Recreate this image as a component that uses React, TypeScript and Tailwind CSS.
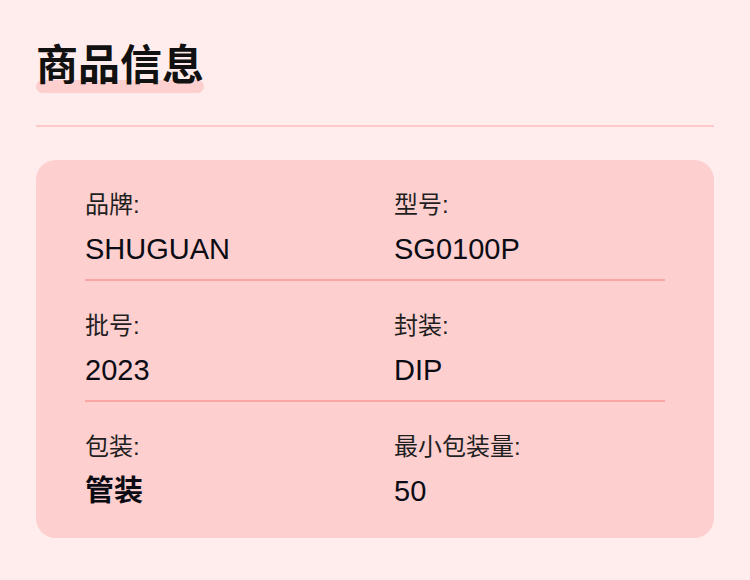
import React from "react";

const rows: [string, string, string, string][] = [
  ["品牌:", "SHUGUAN", "型号:", "SG0100P"],
  ["批号:", "2023", "封装:", "DIP"],
  ["包装:", "管装", "最小包装量:", "50"],
];

const font = { fontFamily: '"Liberation Sans", "Noto Sans CJK SC", sans-serif' };

function Cell({ label, value, bold }: { label: string; value: string; bold?: boolean }) {
  return (
    <div className="flex flex-col">
      <div className="text-[24px] leading-[32px] text-[#1f1f1f]">{label}</div>
      <div
        className={
          "mt-[10px] text-[29px] leading-[36px] text-[#0b0b14] " +
          (bold ? "font-bold" : "font-medium")
        }
      >
        {value}
      </div>
    </div>
  );
}

export default function App() {
  return (
    <div className="min-h-[580px] w-[750px] bg-[#ffecec] px-9 pt-[41px]" style={font}>
      <div className="flex">
        <h1 className="relative text-[42px] leading-[50px] font-bold text-[#111111]">
          <span className="absolute left-0 right-0 top-[39px] h-[13px] rounded-full bg-[#fdcfcf]" />
          <span className="relative">商品信息</span>
        </h1>
      </div>
      <div className="mt-[34px] h-[2px] bg-[#fdc9c9]" />
      <div className="mt-[33px] rounded-[20px] bg-[#fdcfcf] px-[49px] pt-px pb-[17px]">
        {rows.map((r, i) => (
          <div
            key={i}
            className={
              "grid grid-cols-2 gap-x-[38px] pb-[12px] " +
              (i === 0 ? "pt-7 " : "pt-[29px] ") +
              (i < rows.length - 1 ? "border-b-2 border-[#f9a6a6]" : "")
            }
          >
            <Cell label={r[0]} value={r[1]} bold={/[\u4e00-\u9fff]/.test(r[1])} />
            <Cell label={r[2]} value={r[3]} bold={/[\u4e00-\u9fff]/.test(r[3])} />
          </div>
        ))}
      </div>
    </div>
  );
}
